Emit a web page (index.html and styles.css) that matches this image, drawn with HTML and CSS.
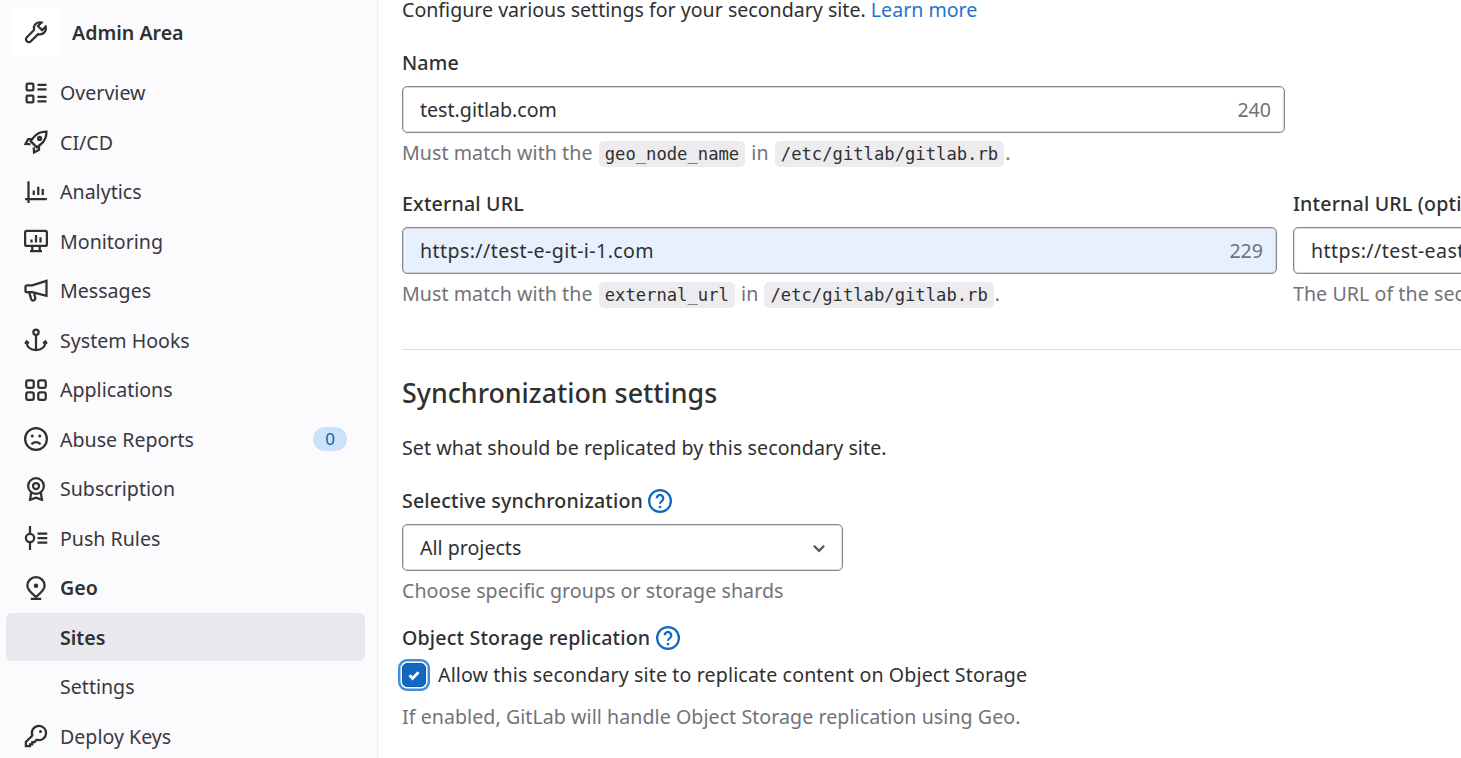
FILE: index.html
```html
<!DOCTYPE html>
<html lang="en">
<head>
    <meta charset="UTF-8">
    <meta name="viewport" content="width=device-width, initial-scale=1.0">
    <title>Admin Area - Geo Sites</title>
    <link rel="stylesheet" href="styles.css">
</head>
<body>

<aside class="sidebar">
    <div class="brand">
        <span class="brand-icon">
            <svg class="icon" viewBox="0 0 16 16"><path d="M10.5 1.5a4 4 0 0 0-3.8 5.2L1.9 11.5a1.9 1.9 0 0 0 2.7 2.7l4.8-4.8a4 4 0 0 0 5-5L12 6.8 9.3 4l2.4-2.3a4 4 0 0 0-1.2-.2z"/></svg>
        </span>
        <span class="brand-name">Admin Area</span>
    </div>
    <ul class="nav">
        <li class="nav-item">
            <svg class="icon" viewBox="0 0 16 16"><rect x="1.75" y="1.75" width="4.5" height="4.5" rx=".75"/><rect x="1.75" y="9.75" width="4.5" height="4.5" rx=".75"/><path d="M9 2.5h6M9 5.5h6M9 10.5h6M9 13.5h6"/></svg>
            Overview
        </li>
        <li class="nav-item">
            <svg class="icon" viewBox="0 0 16 16"><path d="M15 1c-3.8 0-6.5 1.1-8.5 3.8L4.4 7.4l4.2 4.2 2.6-2.1C13.9 7.5 15 4.8 15 1z"/><circle cx="10.4" cy="5.6" r="1"/><path d="M5.2 6H2.8L1 9.3l3.4.2M10 10.8v2.4L6.7 15l-.2-3.4"/></svg>
            CI/CD
        </li>
        <li class="nav-item">
            <svg class="icon" viewBox="0 0 16 16"><path d="M3 .75v14.5M.75 12.75h14.5M6.5 7v3M9.5 4.5V10M12.5 6v4"/></svg>
            Analytics
        </li>
        <li class="nav-item">
            <svg class="icon" viewBox="0 0 16 16"><rect x=".75" y="1.25" width="14.5" height="10" rx="1"/><path d="M5 7v2M8 4v5M11 5.5V9M5.5 11.5v3M10.5 11.5v3M4 14.75h8"/></svg>
            Monitoring
        </li>
        <li class="nav-item">
            <svg class="icon" viewBox="0 0 16 16"><path d="M15 1.25v10L5.5 8.75H2a1 1 0 0 1-1-1v-2.5a1 1 0 0 1 1-1h3.5z"/><path d="M3.5 9l1.3 4.4a1.4 1.4 0 0 0 2.7-.7L6.8 9.5"/></svg>
            Messages
        </li>
        <li class="nav-item">
            <svg class="icon" viewBox="0 0 16 16"><circle cx="8" cy="2.75" r="1.75"/><path d="M8 4.5v10.25M1.75 9c0 3.5 2.5 5.75 6.25 5.75S14.25 12.5 14.25 9M.75 10.5l1-1.5 1.5 1.25M15.25 10.5l-1-1.5-1.5 1.25"/></svg>
            System Hooks
        </li>
        <li class="nav-item">
            <svg class="icon" viewBox="0 0 16 16"><rect x="1.5" y="1.5" width="5" height="5" rx="1.25"/><rect x="9.5" y="1.5" width="5" height="5" rx="1.25"/><rect x="1.5" y="9.5" width="5" height="5" rx="1.25"/><rect x="9.5" y="9.5" width="5" height="5" rx="1.25"/></svg>
            Applications
        </li>
        <li class="nav-item">
            <svg class="icon" viewBox="0 0 16 16"><circle cx="8" cy="8" r="7.25"/><path d="M5 11.5c.7-1 1.8-1.5 3-1.5s2.3.5 3 1.5"/><circle class="dot" cx="5.5" cy="6" r="1"/><circle class="dot" cx="10.5" cy="6" r="1"/></svg>
            Abuse Reports
            <span class="badge">0</span>
        </li>
        <li class="nav-item">
            <svg class="icon" viewBox="0 0 16 16"><circle cx="8" cy="6" r="5.25"/><circle cx="8" cy="6" r="2"/><path d="M4.8 10.5L4 15.25l4-1.5 4 1.5-.8-4.75"/></svg>
            Subscription
        </li>
        <li class="nav-item">
            <svg class="icon" viewBox="0 0 16 16"><circle cx="4" cy="8" r="2.75"/><path d="M4 0v5.25M4 10.75V16M9 5h6.5M9 8h6.5M9 11h6.5"/></svg>
            Push Rules
        </li>
        <li class="nav-item bold">
            <svg class="icon" viewBox="0 0 16 16"><path d="M8 .75A5.75 5.75 0 0 0 2.25 6.5C2.25 9.5 5.5 11.75 8 14c2.5-2.25 5.75-4.5 5.75-7.5A5.75 5.75 0 0 0 8 .75z"/><circle class="dot" cx="8" cy="6.5" r="1.5"/><path d="M4.5 15.25h7"/></svg>
            Geo
        </li>
        <li class="nav-item sub active">Sites</li>
        <li class="nav-item sub">Settings</li>
        <li class="nav-item">
            <svg class="icon" viewBox="0 0 16 16"><path d="M10 1.25a4.75 4.75 0 1 1-1.5 9.26L7 12H5.5v1.5H4v1.25H1.25V12l4.3-4.3A4.75 4.75 0 0 1 10 1.25z"/><circle class="dot" cx="11" cy="5" r="1"/></svg>
            Deploy Keys
        </li>
    </ul>
</aside>

<main class="content">
    <p class="intro">Configure various settings for your secondary site. <a href="#">Learn more</a></p>

    <div class="field name-field">
        <label>Name</label>
        <div class="input-wrap">
            <input type="text" value="test.gitlab.com">
            <span class="count">240</span>
        </div>
        <p class="help">Must match with the <code>geo_node_name</code> in <code>/etc/gitlab/gitlab.rb</code>.</p>
    </div>

    <div class="url-row">
        <div class="field external">
            <label>External URL</label>
            <div class="input-wrap">
                <input class="url-input autofilled" type="text" value="https://test-e-git-i-1.com">
                <span class="count">229</span>
            </div>
            <p class="help">Must match with the <code>external_url</code> in <code>/etc/gitlab/gitlab.rb</code>.</p>
        </div>
        <div class="field internal">
            <label>Internal URL (optional)</label>
            <div class="input-wrap">
                <input class="url-input" type="text" value="https://test-east-git-internal.com">
            </div>
            <p class="help">The URL of the secondary site used internally</p>
        </div>
    </div>

    <hr>

    <h2>Synchronization settings</h2>
    <p class="lead">Set what should be replicated by this secondary site.</p>

    <div class="field select-field">
        <label>Selective synchronization
            <svg class="help-icon" viewBox="0 0 16 16"><circle cx="8" cy="8" r="7.25"/><path d="M5.8 6.2a2.2 2.2 0 1 1 3.4 1.85C8.5 8.5 8 9 8 9.8"/><circle class="dot" cx="8" cy="12" r=".9"/></svg>
        </label>
        <div class="select-box">
            All projects
            <svg class="chevron" viewBox="0 0 16 16"><path d="M3.5 6L8 10.5 12.5 6"/></svg>
        </div>
        <p class="help">Choose specific groups or storage shards</p>
    </div>

    <div class="field check-field">
        <label>Object Storage replication
            <svg class="help-icon" viewBox="0 0 16 16"><circle cx="8" cy="8" r="7.25"/><path d="M5.8 6.2a2.2 2.2 0 1 1 3.4 1.85C8.5 8.5 8 9 8 9.8"/><circle class="dot" cx="8" cy="12" r=".9"/></svg>
        </label>
        <div class="check-row">
            <span class="checkbox">
                <svg viewBox="0 0 16 16"><path d="M4 8.3L6.7 11 12 5.5"/></svg>
            </span>
            <span>Allow this secondary site to replicate content on Object Storage</span>
        </div>
        <p class="help check-help">If enabled, GitLab will handle Object Storage replication using Geo.</p>
    </div>
</main>

</body>
</html>
```

FILE: styles.css
```css
* {
    box-sizing: border-box;
}
html, body {
    height: 758px;
    overflow: hidden;
}
body {
    display: flex;
    margin: 0;
    background-color: #fff;
    color: #303030;
    font-family: "Noto Sans", Arial, sans-serif;
    font-size: 19.6px;
}
p {
    margin: 0;
}
.sidebar {
    flex: 0 0 378px;
    padding: 8px 12px 0 6px;
    background-color: #fbfafd;
    border-right: 1px solid #ececef;
}
.brand {
    display: flex;
    align-items: center;
    gap: 12px;
    height: 48px;
    margin-left: 6px;
    margin-bottom: 12.5px;
    font-weight: 600;
    color: #303030;
}
.brand-icon {
    display: flex;
    align-items: center;
    justify-content: center;
    width: 48px;
    height: 48px;
    background-color: #fff;
    border-radius: 6px;
}
.icon {
    flex: 0 0 24px;
    width: 24px;
    height: 24px;
    fill: none;
    stroke: #303030;
    stroke-width: 1.5;
}
.icon .dot {
    fill: #303030;
    stroke: none;
}
.nav {
    list-style: none;
    margin: 0;
    padding: 0;
}
.nav-item {
    display: flex;
    align-items: center;
    gap: 12px;
    height: 48px;
    margin-bottom: 1.5px;
    padding: 0 18px;
    border-radius: 6px;
    color: #3a383f;
}
.nav-item.bold {
    font-weight: 600;
    color: #303030;
}
.nav-item.sub {
    padding-left: 54px;
}
.nav-item.active {
    background-color: #e9e8ec;
    font-weight: 600;
    color: #303030;
}
.badge {
    margin-left: auto;
    width: 34px;
    height: 24px;
    border-radius: 12px;
    background-color: #cbe2f9;
    color: #0b5cad;
    font-size: 17px;
    line-height: 24px;
    text-align: center;
}
.content {
    flex: 0 0 auto;
    width: 1260px;
    padding: 0 0 0 24px;
}
.intro {
    height: 21px;
    margin-bottom: 29px;
    line-height: 20px;
}
a {
    color: #1f75cb;
    text-decoration: none;
}
label {
    display: block;
    font-weight: 500;
    letter-spacing: .17px;
    line-height: 26px;
    margin-bottom: 10px;
}
.input-wrap {
    position: relative;
}
input {
    display: block;
    width: 100%;
    height: 47px;
    padding: 0 17px;
    background-color: #fff;
    border: 1px solid #89888d;
    border-radius: 5px;
    box-shadow: inset 0 0 0 1px rgba(137, 136, 141, .3);
    color: #303030;
    font-family: inherit;
    font-size: 19.6px;
    outline: none;
}
input.url-input {
    letter-spacing: .4px;
}
input.autofilled {
    background-color: #e8f0fe;
}
.count {
    position: absolute;
    top: 11px;
    right: 14px;
    color: #737278;
    line-height: 26px;
}
.help {
    color: #737278;
    letter-spacing: .06px;
    line-height: 26px;
    margin-top: 7px;
}
code {
    display: inline-block;
    padding: 0 6px;
    margin: 0 1px;
    background-color: #ececef;
    border-radius: 5px;
    color: #303030;
    font-family: "DejaVu Sans Mono", "Liberation Mono", monospace;
    font-size: 17.2px;
    letter-spacing: 0;
    line-height: 26px;
}
.name-field {
    width: 883px;
    margin-bottom: 24px;
}
.url-row {
    display: flex;
    gap: 16px;
}
.external {
    flex: 0 0 875px;
}
.internal {
    flex: 0 0 600px;
}
hr {
    height: 1px;
    margin: 41px 0 26px;
    background-color: #dcdcde;
    border: 0;
}
h2 {
    margin: 0 0 25px;
    font-size: 26.8px;
    font-weight: 500;
    line-height: 34px;
    color: #303030;
}
.lead {
    letter-spacing: .08px;
    line-height: 26px;
    margin-bottom: 27px;
}
.select-field {
    width: 441px;
    margin-bottom: 21px;
}
.help-icon {
    width: 24px;
    height: 24px;
    vertical-align: -5px;
    fill: none;
    stroke: #1068bf;
    stroke-width: 1.5;
}
.help-icon .dot {
    fill: #1068bf;
    stroke: none;
}
.select-box {
    display: flex;
    align-items: center;
    justify-content: space-between;
    height: 47px;
    padding: 0 14px 0 17px;
    background-color: #fff;
    border: 1px solid #89888d;
    border-radius: 5px;
    box-shadow: inset 0 0 0 1px rgba(137, 136, 141, .3);
}
.chevron {
    width: 18px;
    height: 18px;
    fill: none;
    stroke: #555;
    stroke-width: 2;
}
.check-field label {
    margin-bottom: 11px;
}
.check-row {
    display: flex;
    align-items: center;
    gap: 12px;
    letter-spacing: .13px;
    line-height: 26px;
}
.checkbox {
    display: flex;
    align-items: center;
    justify-content: center;
    flex: 0 0 24px;
    width: 24px;
    height: 24px;
    background-color: #1068bf;
    border: 1px solid #0b5cad;
    border-radius: 5px;
    box-shadow: 0 0 0 1.5px #fff, 0 0 0 4px #428fdc;
}
.checkbox svg {
    width: 18px;
    height: 18px;
    fill: none;
    stroke: #fff;
    stroke-width: 2.5;
}
.check-help {
    margin-top: 16px;
}
```
